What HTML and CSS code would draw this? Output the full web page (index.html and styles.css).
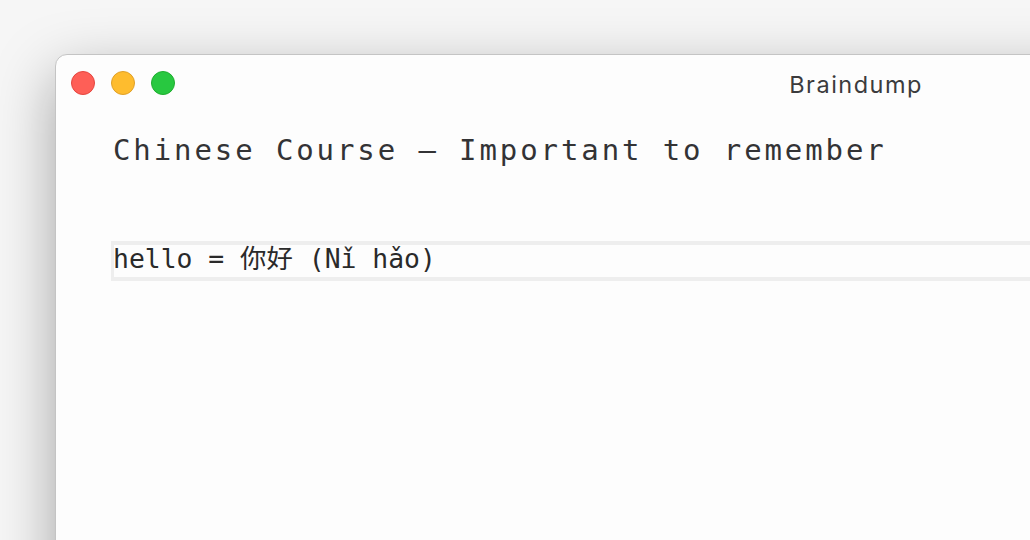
FILE: index.html
```html
<!DOCTYPE html>
<html>
<head>
<meta charset="utf-8">
<link rel="stylesheet" href="styles.css">
</head>
<body>
<div class="window">
  <div class="titlebar">
    <div class="lights">
      <span class="light red"></span>
      <span class="light yellow"></span>
      <span class="light green"></span>
    </div>
    <div class="title">Braindump</div>
  </div>
  <div class="content">
    <h1 class="heading">Chinese Course — Important to remember</h1>
    <div class="cell">
      <div class="cell-text">hello = 你好 (Nǐ hǎo)</div>
    </div>
  </div>
</div>
</body>
</html>
```
FILE: styles.css
```css
html, body {
  margin: 0;
  padding: 0;
  height: 100%;
  overflow: hidden;
}
body {
  background: #f6f6f6;
}
.window {
  margin-left: 55px;
  margin-top: 54px;
  width: 1600px;
  height: 700px;
  background: #fdfdfd;
  border: 1px solid #c4c4c4;
  border-radius: 12px;
  box-shadow: 0 20px 60px rgba(0, 0, 0, 0.34);
}
.titlebar {
  height: 56px;
  display: flex;
  align-items: center;
  padding-left: 15px;
}
.lights {
  display: flex;
  gap: 16px;
}
.light {
  width: 24px;
  height: 24px;
  border-radius: 50%;
  box-sizing: border-box;
  border: 1px solid rgba(0, 0, 0, 0.1);
}
.red { background: #fe5f57; border-color: #e5463f; }
.yellow { background: #febc2e; border-color: #e0a028; }
.green { background: #28c840; border-color: #1fad2f; }
.title {
  margin-left: auto;
  margin-right: 733px;
  font-family: "Inter", "Open Sans", sans-serif;
  font-size: 23.5px;
  letter-spacing: 1.5px;
  color: #3b3b3d;
  padding-top: 2px;
}
.content {
  padding-left: 57px;
}
.heading {
  margin: 23px 0 0 0;
  font-family: "DejaVu Sans Mono", monospace;
  font-weight: normal;
  font-size: 29px;
  line-height: 32px;
  letter-spacing: 2.9px;
  color: #333335;
}
.cell {
  margin-top: 75px;
  margin-left: -2px;
  border: 4px solid #eeeeee;
  border-left-width: 3px;
  border-right: none;
  padding-bottom: 4px;
}
.cell-text {
  height: 28px;
  line-height: 28px;
  margin-left: -1px;
  font-family: "DejaVu Sans Mono", "Noto Sans CJK SC", monospace;
  font-size: 26.4px;
  color: #2a2a2a;
  white-space: nowrap;
}
```
